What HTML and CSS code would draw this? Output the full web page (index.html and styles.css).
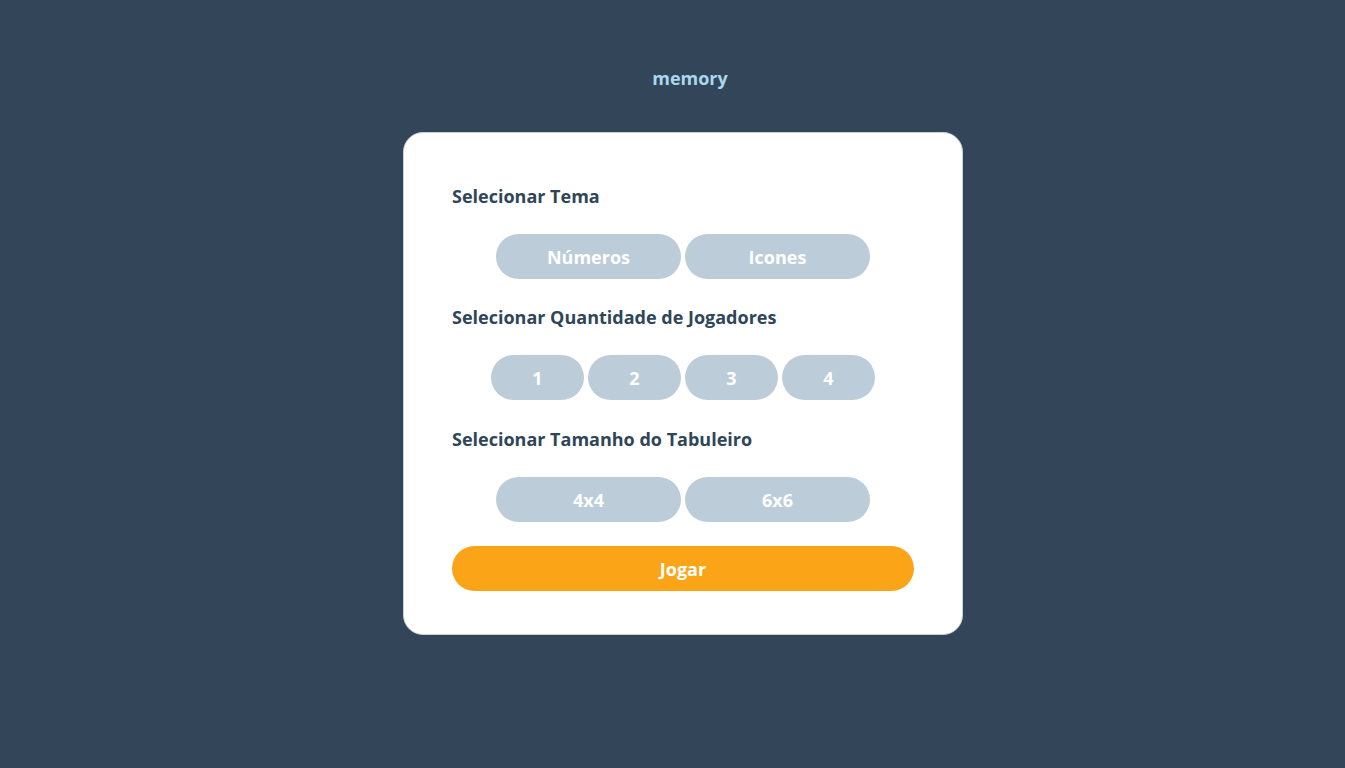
FILE: index.html
```html
<!DOCTYPE html>
<html lang="pt">
<head>
<meta charset="utf-8">
<title>memory</title>
<link rel="stylesheet" href="styles.css">
</head>
<body>
<main class="page">
  <h1 class="logo">memory</h1>
  <section class="card">
    <h2 class="label">Selecionar Tema</h2>
    <div class="options">
      <button class="opt wide">Números</button>
      <button class="opt wide">Icones</button>
    </div>
    <h2 class="label">Selecionar Quantidade de Jogadores</h2>
    <div class="options mid">
      <button class="opt narrow">1</button>
      <button class="opt narrow">2</button>
      <button class="opt narrow">3</button>
      <button class="opt narrow">4</button>
    </div>
    <h2 class="label">Selecionar Tamanho do Tabuleiro</h2>
    <div class="options last">
      <button class="opt wide">4x4</button>
      <button class="opt wide">6x6</button>
    </div>
    <button class="play">Jogar</button>
  </section>
</main>
</body>
</html>
```
FILE: styles.css
```css
* { box-sizing: border-box; }
html, body { margin: 0; padding: 0; }
body {
  background: #334659;
  font-family: "Open Sans", "Noto Sans", sans-serif;
  min-height: 768px;
}
.page {
  display: flex;
  flex-direction: column;
  align-items: center;
  padding-top: 66px;
  padding-left: 21px;
}
.logo {
  margin: 0;
  padding-left: 14px;
  font-size: 18px;
  line-height: 24px;
  font-weight: 700;
  color: #a9d7ee;
}
.card {
  margin-top: 42px;
  width: 560px;
  background: #fff;
  border: 1px solid #c9d0d6;
  border-radius: 20px;
  padding: 51px 48px 43px;
  display: flex;
  flex-direction: column;
}
.label {
  margin: 0 0 26px;
  font-size: 18px;
  line-height: 24px;
  font-weight: 700;
  color: #2f4658;
}
.options {
  display: flex;
  justify-content: center;
  gap: 4px;
  margin-bottom: 26px;
}
.options.mid { margin-bottom: 27px; }
.options.last { margin-bottom: 24px; }
.opt, .play {
  border: none;
  height: 45px;
  border-radius: 23px;
  color: #fff;
  font-family: inherit;
  font-size: 18px;
  font-weight: 700;
  cursor: pointer;
}
.opt { background: #bccdd9; }
.wide { width: 185px; }
.narrow { width: 93px; }
.play {
  width: 100%;
  background: #fca417;
}
```
